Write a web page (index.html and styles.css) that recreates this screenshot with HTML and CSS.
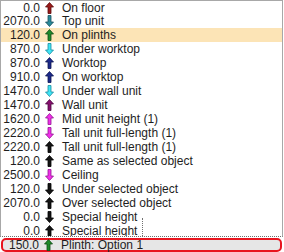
FILE: index.html
```html
<!DOCTYPE html>
<html lang="en">
<head>
    <meta charset="UTF-8">
    <title>Heights</title>
    <link rel="stylesheet" href="styles.css">
</head>
<body>
    <svg width="0" height="0" class="defs">
        <defs>
            <path id="up" d="M4.5 0.5 L8.5 5 L6 5 L6 11.5 L3 11.5 L3 5 L0.5 5 Z"/>
            <path id="down" d="M4.5 11.5 L8.5 7 L6 7 L6 0.5 L3 0.5 L3 7 L0.5 7 Z"/>
        </defs>
    </svg>
    <div class="picker">
        <div class="list">
            <div class="row"><span class="num">0.0</span><svg class="arrow red" viewBox="0 0 9 12"><use href="#up"/></svg><span class="label">On floor</span></div>
            <div class="row"><span class="num">2070.0</span><svg class="arrow teal" viewBox="0 0 9 12"><use href="#down"/></svg><span class="label">Top unit</span></div>
            <div class="row selected"><span class="num">120.0</span><svg class="arrow green" viewBox="0 0 9 12"><use href="#up"/></svg><span class="label">On plinths</span></div>
            <div class="row"><span class="num">870.0</span><svg class="arrow cyan" viewBox="0 0 9 12"><use href="#down"/></svg><span class="label">Under worktop</span></div>
            <div class="row"><span class="num">870.0</span><svg class="arrow navy" viewBox="0 0 9 12"><use href="#up"/></svg><span class="label">Worktop</span></div>
            <div class="row"><span class="num">910.0</span><svg class="arrow navy" viewBox="0 0 9 12"><use href="#up"/></svg><span class="label">On worktop</span></div>
            <div class="row"><span class="num">1470.0</span><svg class="arrow cyan" viewBox="0 0 9 12"><use href="#down"/></svg><span class="label">Under wall unit</span></div>
            <div class="row"><span class="num">1470.0</span><svg class="arrow purple" viewBox="0 0 9 12"><use href="#up"/></svg><span class="label">Wall unit</span></div>
            <div class="row"><span class="num">1620.0</span><svg class="arrow magenta" viewBox="0 0 9 12"><use href="#up"/></svg><span class="label">Mid unit height (1)</span></div>
            <div class="row"><span class="num">2220.0</span><svg class="arrow magenta" viewBox="0 0 9 12"><use href="#down"/></svg><span class="label">Tall unit full-length (1)</span></div>
            <div class="row"><span class="num">2220.0</span><svg class="arrow black" viewBox="0 0 9 12"><use href="#up"/></svg><span class="label">Tall unit full-length (1)</span></div>
            <div class="row"><span class="num">120.0</span><svg class="arrow black" viewBox="0 0 9 12"><use href="#up"/></svg><span class="label">Same as selected object</span></div>
            <div class="row"><span class="num">2500.0</span><svg class="arrow magenta" viewBox="0 0 9 12"><use href="#down"/></svg><span class="label">Ceiling</span></div>
            <div class="row"><span class="num">120.0</span><svg class="arrow black" viewBox="0 0 9 12"><use href="#down"/></svg><span class="label">Under selected object</span></div>
            <div class="row"><span class="num">2070.0</span><svg class="arrow black" viewBox="0 0 9 12"><use href="#up"/></svg><span class="label">Over selected object</span></div>
            <div class="row"><span class="num">0.0</span><svg class="arrow black" viewBox="0 0 9 12"><use href="#down"/></svg><span class="label">Special height</span></div>
            <div class="row last"><span class="num">0.0</span><svg class="arrow black" viewBox="0 0 9 12"><use href="#up"/></svg><span class="label">Special height</span></div>
            <div class="focus"></div>
        </div>
        <div class="combo">
            <div class="row"><span class="num">150.0</span><svg class="arrow green" viewBox="0 0 9 12"><use href="#up"/></svg><span class="label">Plinth: Option 1</span></div>
        </div>
    </div>
</body>
</html>
```

FILE: styles.css
```css
/* General styling */
body {
    margin: 0;
    background: #fff;
    font-family: 'Liberation Sans', Arial, sans-serif;
    font-size: 12px;
    color: #1e1e1e;
}
.defs {
    position: absolute;
}
.picker {
    width: 283px;
}
.list {
    position: relative;
    border: 1px solid #a8a8a8;
    border-bottom: 1px dotted #707070;
    height: 235px;
    overflow: hidden;
}
.row {
    display: flex;
    align-items: center;
    height: 14px;
    white-space: nowrap;
}
.list .row:first-child {
    height: 13px;
}
.row.selected {
    background: #fce4b6;
}
.num {
    width: 39px;
    text-align: right;
}
.arrow {
    width: 9px;
    height: 12px;
    margin-left: 5px;
    stroke-width: 0.8;
}
.label {
    margin-left: 8px;
}
.focus {
    position: absolute;
    left: 141px;
    top: 217px;
    height: 18px;
    border-left: 1px dotted #707070;
}
/* Arrow colours */
.arrow.red { fill: #9a1a1a; stroke: #5a0a0a; }
.arrow.teal { fill: #2a8a9a; stroke: #1a5060; }
.arrow.green { fill: #1f8a2a; stroke: #0f4a14; }
.arrow.cyan { fill: #40e4f4; stroke: #1a8aa0; }
.arrow.navy { fill: #1c2a8a; stroke: #0c1450; }
.arrow.purple { fill: #86106e; stroke: #4a0840; }
.arrow.magenta { fill: #f030e8; stroke: #901890; }
.arrow.black { fill: #151515; stroke: #000; }
/* Combo box */
.combo {
    margin: 1px 0 0 1px;
    width: 281px;
    box-sizing: border-box;
    border: 2px solid #e8141e;
    border-radius: 5px;
    background: #e6e6e6;
}
.combo .row {
    height: 10px;
}
.combo .num {
    width: 36px;
}
```
